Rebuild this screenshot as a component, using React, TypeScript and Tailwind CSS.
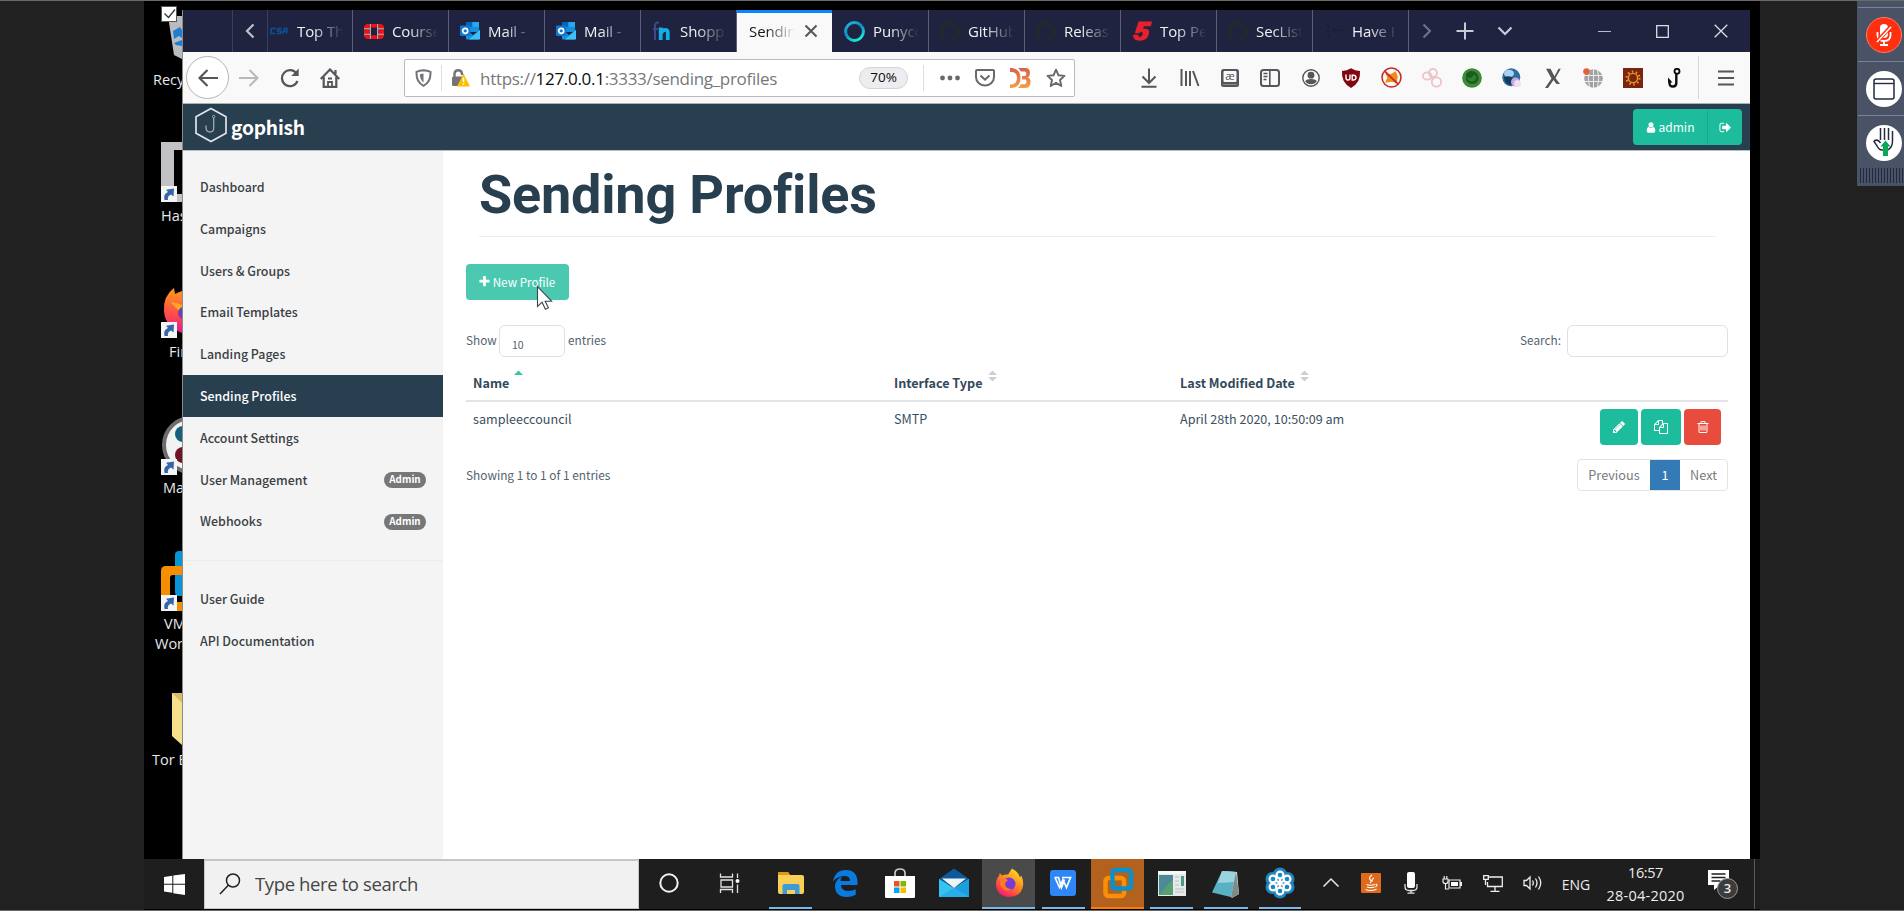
import React from "react";

const SEGOE = "font-['Open_Sans','Noto_Sans',sans-serif]";
const SITE = "font-['Noto_Sans_CJK_SC','Open_Sans',sans-serif]";

/* ---------- Font Awesome 4 glyphs ---------- */
const FA = {
  plus: "M1600 736v192q0 40-28 68t-68 28h-416v416q0 40-28 68t-68 28h-192q-40 0-68-28t-28-68v-416h-416q-40 0-68-28t-28-68v-192q0-40 28-68t68-28h416v-416q0-40 28-68t68-28h192q40 0 68 28t28 68v416h416q40 0 68 28t28 68z",
  user: "M1536 1399q0 109-62.5 187t-150.5 78h-854q-88 0-150.5-78t-62.5-187q0-85 8.5-160.5t31.5-152 58.5-131 94-89 134.5-34.5q131 128 313 128t313-128q76 0 134.5 34.5t94 89 58.5 131 31.5 152 8.5 160.5zm-256-887q0 159-112.5 271.5t-271.5 112.5-271.5-112.5-112.5-271.5 112.5-271.5 271.5-112.5 271.5 112.5 112.5 271.5z",
  signOut:
    "M704 1440q0 4 1 20t.5 26.5-3 23.5-10 19.5-20.5 6.5h-320q-119 0-203.5-84.5t-84.5-203.5v-704q0-119 84.5-203.5t203.5-84.5h320q13 0 22.5 9.5t9.5 22.5q0 4 1 20t.5 26.5-3 23.5-10 19.5-20.5 6.5h-320q-66 0-113 47t-47 113v704q0 66 47 113t113 47h312l11.5 1 11.5 3 8 5.5 7 9 2 13.5zm928-544q0 26-19 45l-544 544q-19 19-45 19t-45-19-19-45v-288h-448q-26 0-45-19t-19-45v-384q0-26 19-45t45-19h448v-288q0-26 19-45t45-19 45 19l544 544q19 19 19 45z",
  pencil:
    "M491 1536l91-91-235-235-91 91v107h128v128h107zm523-928q0-22-22-22-10 0-17 7l-542 542q-7 7-7 17 0 22 22 22 10 0 17-7l542-542q7-7 7-17zm-54-192l416 416-832 832h-416v-416zm683 96q0 53-37 90l-166 166-416-416 166-165q36-38 90-38 53 0 91 38l235 234q37 39 37 91z",
  trash:
    "M704 736v576q0 14-9 23t-23 9h-64q-14 0-23-9t-9-23v-576q0-14 9-23t23-9h64q14 0 23 9t9 23zm256 0v576q0 14-9 23t-23 9h-64q-14 0-23-9t-9-23v-576q0-14 9-23t23-9h64q14 0 23 9t9 23zm256 0v576q0 14-9 23t-23 9h-64q-14 0-23-9t-9-23v-576q0-14 9-23t23-9h64q14 0 23 9t9 23zm128 724v-948h-896v948q0 22 7 40.5t14.5 27 10.5 8.5h832q3 0 10.5-8.5t14.5-27 7-40.5zm-672-1076h448l-48-117q-7-9-17-11h-317q-10 2-17 11zm928 32v64q0 14-9 23t-23 9h-96v948q0 83-47 143.500t-113 60.500h-832q-66 0-113-58.500t-47-141.500v-952h-96q-14 0-23-9t-9-23v-64q0-14 9-23t23-9h309l70-167q15-37 54-63t79-26h320q40 0 79 26t54 63l70 167h309q14 0 23 9t9 23z",
  files:
    "M1696 384q40 0 68 28t28 68v1216q0 40-28 68t-68 28h-960q-40 0-68-28t-28-68v-288h-544q-40 0-68-28t-28-68v-672q0-40 20-88t48-76l408-408q28-28 76-48t88-20h416q40 0 68 28t28 68v328q68-40 128-40h416zm-544 213l-299 299h299v-299zm-640-384l-299 299h299v-299zm196 647l316-316v-416h-384v416q0 40-28 68t-68 28h-416v640h512v-256q0-40 20-88t48-76zm956 804v-1152h-384v416q0 40-28 68t-68 28h-416v640h896z",
};

function Fa({ d, className }: { d: string; className: string }) {
  return (
    <svg viewBox="0 0 1792 1792" className={className} fill="currentColor">
      <path d={d} />
    </svg>
  );
}

function Icon({ children, className = "h-5 w-5", box = "0 0 20 20" }: { children: React.ReactNode; className?: string; box?: string }) {
  return (
    <svg viewBox={box} className={`shrink-0 ${className}`} fill="none">
      {children}
    </svg>
  );
}

/* ---------- Tab strip ---------- */
const OutlookIcon = () => (
  <Icon>
    <rect x="6" y="1" width="13" height="10" rx="1" fill="#1490df" />
    <path d="M6 1h6.500v5H6z" fill="#0364b8" />
    <path d="M12.500 1H19v5h-6.500z" fill="#28a8ea" />
    <path d="M6 9l7 5 7-5v8.500a1 1 0 01-1 1H7a1 1 0 01-1-1z" fill="#1a8fe0" />
    <path d="M20 9v8.500a1 1 0 01-1 1H9z" fill="#3cc0f5" />
    <rect x="0" y="4.500" width="10.500" height="10.500" rx="1" fill="#0f78d4" />
    <circle cx="5.200" cy="9.800" r="2.500" stroke="#fff" strokeWidth="1.700" />
  </Icon>
);
const GithubIcon = () => (
  <Icon>
    <path
      fill="#23282e"
      d="M10 .3a10 10 0 00-3.200 19.500c.5.100.7-.2.700-.5v-1.700c-2.800.6-3.400-1.300-3.400-1.300-.5-1.200-1.100-1.500-1.100-1.500-.9-.6.1-.6.1-.6 1 .1 1.500 1 1.500 1 .9 1.500 2.300 1.100 2.900.8.1-.6.3-1.100.6-1.300-2.200-.3-4.600-1.100-4.600-5 0-1.100.4-2 1-2.700-.1-.3-.4-1.300.1-2.700 0 0 .8-.3 2.800 1a9.600 9.600 0 015 0c1.900-1.300 2.700-1 2.700-1 .5 1.400.2 2.400.1 2.700.6.700 1 1.600 1 2.700 0 3.900-2.300 4.700-4.600 5 .4.3.7.9.7 1.800v2.800c0 .3.2.6.7.5A10 10 0 0010 .3"
    />
  </Icon>
);
const CsaIcon = () => (
  <Icon className="h-5 w-[18px]" box="0 0 18 20">
    <path d="M6 7.500H1.500L.8 12.500H5M12 7.500H8L7.500 10H11l-.5 2.500H6.500M12.500 12.500L14.500 7.500H17l-.5 5M13.500 10.500h3" stroke="#0c4f96" strokeWidth="1.600" />
  </Icon>
);
const FortinetIcon = () => (
  <Icon>
    <g fill="#fb0d0d">
      <path d="M0 7V6a4 4 0 013-3h2.500v4zM0 8.500h5.500v4H0zM0 14h5.500v4H3a4 4 0 01-3-3z" />
      <path d="M7.200 3h5.600v3.500H7.200zM7.200 14.300h5.600V18H7.200z" />
      <path d="M20 7V6a4 4 0 00-3-3h-2.500v4zM14.500 8.500H20v4h-5.500zM20 14h-5.500v4H17a4 4 0 003-3z" />
    </g>
    <path d="M6.300 3v15M13.700 3v15M0 7.800h6M14 7.800h6M0 13.200h6M14 13.200h6" stroke="#d8c8d0" strokeWidth="1" />
  </Icon>
);
const FinIcon = () => (
  <Icon>
    <path d="M3 19V5q0-4 4-3.500M1 8h5" stroke="#3c4a80" strokeWidth="2" />
    <path d="M8.700 19V6.500M15.800 19v-7.500q0-2.600-2.400-2.600-4 0-4.200 4" stroke="#12aee8" strokeWidth="3.800" />
  </Icon>
);
const PunyIcon = () => (
  <Icon className="h-[21px] w-[21px]">
    <defs>
      <linearGradient id="puny" x1="0" y1="0" x2=".6" y2="1">
        <stop offset="0" stopColor="#18c0dc" />
        <stop offset=".5" stopColor="#1488d0" />
        <stop offset="1" stopColor="#14e8d0" />
      </linearGradient>
    </defs>
    <circle cx="10" cy="10" r="8.500" stroke="url(#puny)" strokeWidth="2.800" />
  </Icon>
);
const FiveIcon = () => (
  <Icon>
    <path d="M6.500.5H20l-1.200 4.800h-7l-.6 2.500q7-1 5.800 4.600-1.500 7.300-9.500 7.300Q.7 19.700 1 13.800h5.300q-.1 2.200 1.500 2.200 2.200 0 2.800-2.700.5-2.300-1.300-2.300-1.300 0-2 1.200H2.800z" fill="#e8202c" />
  </Icon>
);
const PwnedIcon = () => (
  <Icon>
    <path d="M3 4l2 2M2 10h3M4 13l2 2M9 9.500h4M15 9.500h4" stroke="#181c30" strokeWidth="1.500" />
  </Icon>
);

type TabData = { title: string; icon?: React.ReactNode; width: string; pad: string; active?: boolean };
const TABS: TabData[] = [
  { title: "Top Th", icon: <CsaIcon />, width: "w-[85px]", pad: "pl-[2px] gap-[9px]" },
  { title: "Course", icon: <FortinetIcon />, width: "w-24", pad: "pl-[11px] gap-2" },
  { title: "Mail -", icon: <OutlookIcon />, width: "w-24", pad: "pl-[11px] gap-2" },
  { title: "Mail -", icon: <OutlookIcon />, width: "w-24", pad: "pl-[11px] gap-2" },
  { title: "Shopp", icon: <FinIcon />, width: "w-24", pad: "pl-[11px] gap-2" },
  { title: "Sending", width: "w-[95px]", pad: "pl-[12px]", active: true },
  { title: "Punyco", icon: <PunyIcon />, width: "w-[97px]", pad: "pl-3 gap-2" },
  { title: "GitHub", icon: <GithubIcon />, width: "w-24", pad: "pl-[11px] gap-2" },
  { title: "Releas", icon: <GithubIcon />, width: "w-24", pad: "pl-[11px] gap-2" },
  { title: "Top Pe", icon: <FiveIcon />, width: "w-24", pad: "pl-[11px] gap-2" },
  { title: "SecList", icon: <GithubIcon />, width: "w-24", pad: "pl-[11px] gap-2" },
  { title: "Have I", icon: <PwnedIcon />, width: "w-24", pad: "pl-[11px] gap-2" },
];

function Tab({ tab }: { tab: TabData }) {
  const tone = tab.active ? "bg-[#f9f9fa] text-[#15141a] border-t-[3px] border-t-[#0a84ff] pb-[3px]" : "text-[#f0f0f4] border-r border-[#5c5d77]";
  return (
    <div className={`flex h-full shrink-0 items-center ${tab.width} ${tab.pad} ${tone}`}>
      {tab.icon}
      <span className="w-[47px] overflow-hidden whitespace-nowrap pt-px text-[15px] tracking-[-0.1px] [mask-image:linear-gradient(to_right,black_35%,transparent_98%)]">{tab.title}</span>
      {tab.active && (
        <Icon className="ml-[7px] h-4 w-4" box="0 0 16 16">
          <path d="M2.500 2.500l11 11M13.500 2.500l-11 11" stroke="#55555a" strokeWidth="2" />
        </Icon>
      )}
    </div>
  );
}

function TabStrip() {
  return (
    <div className="flex h-[42px] shrink-0 bg-[#20233f]">
      <div className="w-[50px] border-r border-[#3c3e5a]" />
      <div className="flex w-[35px] items-center justify-center border-r border-[#3c3e5a]">
        <Icon className="h-4 w-3" box="0 0 12 16">
          <path d="M9.500 1.500L3 8l6.500 6.500" stroke="#c0c1cc" strokeWidth="2.200" />
        </Icon>
      </div>
      {TABS.map((t, i) => (
        <Tab key={i} tab={t} />
      ))}
      <div className="flex w-[36px] items-center justify-center">
        <Icon className="h-4 w-3" box="0 0 12 16">
          <path d="M2.500 1.500L9 8l-6.500 6.500" stroke="#72738a" strokeWidth="2" />
        </Icon>
      </div>
      <div className="flex w-[39px] items-center justify-center">
        <Icon className="h-[18px] w-[18px]" box="0 0 18 18">
          <path d="M9 .5v17M.5 9h17" stroke="#c9cad4" strokeWidth="2" />
        </Icon>
      </div>
      <div className="flex w-[42px] items-center justify-center">
        <Icon className="h-4 w-4" box="0 0 16 16">
          <path d="M1.500 4.500L8 11l6.500-6.500" stroke="#c9cad4" strokeWidth="2.200" />
        </Icon>
      </div>
      <div className="ml-[49px] flex w-[58px] items-center justify-center">
        <Icon className="h-[13px] w-[13px]" box="0 0 13 13">
          <path d="M0 6.500h13" stroke="#b9bac6" />
        </Icon>
      </div>
      <div className="flex w-[58px] items-center justify-center">
        <Icon className="h-[13px] w-[13px]" box="0 0 13 13">
          <path d="M.7.7h11.600v11.600H.7z" stroke="#dddde4" strokeWidth="1.300" />
        </Icon>
      </div>
      <div className="flex w-[59px] items-center justify-center">
        <Icon className="h-[14px] w-[14px]" box="0 0 14 14">
          <path d="M.7.7l12.600 12.600M13.300.7L.7 13.300" stroke="#dddde4" strokeWidth="1.300" />
        </Icon>
      </div>
    </div>
  );
}

/* ---------- Address bar ---------- */
const G = "#55555a";
const TOOLBAR: React.ReactNode[] = [
  <Icon>
    <path d="M10 .5v14M3.500 8.500L10 15l6.500-6.500M2.500 18.700h15" stroke={G} strokeWidth="2" />
  </Icon>,
  <Icon>
    <path d="M1.500 1v17M6 3v15M10 3v15M13 3l5.500 15" stroke={G} strokeWidth="2" />
  </Icon>,
  <Icon>
    <rect x="1" y="1" width="18" height="18" rx="2.500" fill={G} />
    <rect x="3.500" y="3" width="13" height="11" rx="1" fill="#f9f9fa" />
    <path d="M3 16.500h14" stroke="#8d8d92" />
    <text x="10" y="11.500" fontSize="11" textAnchor="middle" fill={G} className="font-['Open_Sans']">
      æ
    </text>
  </Icon>,
  <Icon>
    <rect x="1" y="2" width="18" height="16" rx="2.500" stroke={G} strokeWidth="2" />
    <path d="M9.800 2v16M3.500 5.500h4M3.500 8.500h4M3.500 11.500h3" stroke={G} strokeWidth="1.600" />
  </Icon>,
  <Icon>
    <circle cx="10" cy="10" r="8.200" stroke={G} strokeWidth="1.400" />
    <circle cx="10" cy="7.200" r="3.400" fill={G} />
    <path d="M4.200 13q1.500-2 5.800-2t5.800 2q-1.800 3.300-5.800 3.300T4.200 13z" fill={G} />
  </Icon>,
  <Icon>
    <path d="M10 .3q4 2.400 9 2.700 1 11.500-9 17Q0 14.500 1 3q5-.3 9-2.700z" fill="#800610" />
    <path d="M5 6.500v3.500q0 2 2 2t2-2V6.500M11.200 7.200h1.500q2.300.2 2.300 2.400t-2.300 2.400h-1.500z" stroke="#fff" strokeWidth="1.400" />
  </Icon>,
  <Icon className="h-[21px] w-[21px]">
    <path d="M4 15l2-5-2-4 5 1 5-3 2 5-1 6-5-1z" fill="#f08a1a" />
    <circle cx="10" cy="10" r="9" stroke="#c82a20" strokeWidth="1.500" />
    <path d="M3.500 4l13 12.500" stroke="#c82a20" strokeWidth="1.700" />
  </Icon>,
  <Icon>
    <g stroke="#ecc3c6" strokeWidth="1.800">
      <circle cx="11" cy="5" r="4" />
      <ellipse cx="5.300" cy="8" rx="4.400" ry="3.600" />
      <circle cx="14.500" cy="14" r="4.700" />
      <path d="M8 10l4 1" />
    </g>
  </Icon>,
  <Icon>
    <circle cx="10" cy="10" r="9.800" fill="#3c8a34" />
    <path d="M4 6q3-4 8-2.500 5 2 4.500 7.500-1 5-7 5-5-1-5.500-5z" fill="#1c5a20" />
    <path d="M5 9q4 3 7-2.500 3 1 2 4.500-1.500 3-5 2.500Q5.500 13 5 9z" fill="#2f8030" />
  </Icon>,
  <Icon>
    <circle cx="9.300" cy="9.300" r="9" fill="#2d6c9e" />
    <ellipse cx="7" cy="5.500" rx="5" ry="3.800" fill="#a9d2ee" />
    <path d="M2 9q6-2 9 1t-2 7Q2 16 2 9z" fill="#123b60" />
    <circle cx="13.500" cy="14" r="4.500" fill="#c9a6dc" />
    <circle cx="15.500" cy="15.500" r="3.500" fill="#ece0f4" />
  </Icon>,
  <Icon>
    <path d="M3 .8h4.500l4 7.500L15.500.8h2.300L12.500 10l4.500 6h-3.500L10.500 12 5 20H2l6.500-9.500z" fill={G} />
  </Icon>,
  <Icon>
    <circle cx="10.500" cy="10.500" r="9.300" fill="#a2a2a2" />
    <path d="M1 7.500h19M1 13.500h19M10.500 1v19M6.500 2q-2.500 8 0 17M14.500 2q2.500 8 0 17" stroke="#ececec" />
    <circle cx="3.500" cy="3.500" r="3.300" fill="#e0643a" />
  </Icon>,
  <Icon>
    <rect width="20" height="20" fill="#7d2410" />
    <circle cx="10" cy="10" r="4.600" stroke="#e39a2c" strokeWidth="1.400" />
    <circle cx="10" cy="10" r="6.400" stroke="#e39a2c" strokeWidth="2.200" strokeDasharray="1.500 2.520" />
  </Icon>,
  <Icon>
    <circle cx="13" cy="3.300" r="2.500" stroke="#0c0c0d" strokeWidth="1.900" />
    <path d="M12.300 6v9q0 3.500-3.400 3.500T5.500 15v-2.500" stroke="#0c0c0d" strokeWidth="2.400" />
    <path d="M4 14.500V9.500l4.500 5z" fill="#0c0c0d" />
  </Icon>,
];

function AddressBar() {
  return (
    <div className="flex h-[52px] shrink-0 items-center border-b border-[#a9b3b5] bg-[#f9f9fa]">
      <div className="ml-[3px] flex h-[43px] w-[43px] items-center justify-center rounded-full border border-[#b5b5b8] bg-white">
        <Icon>
          <path d="M20 10H2M9.500 2L1.500 10l8 8" stroke={G} strokeWidth="2.200" />
        </Icon>
      </div>
      <div className="flex w-[40px] items-center justify-center">
        <Icon>
          <path d="M0 10h18M10.500 2l8 8-8 8" stroke="#b9b9bb" strokeWidth="2" />
        </Icon>
      </div>
      <div className="flex w-[41px] items-center justify-center">
        <Icon>
          <path d="M16.500 5.500A8 8 0 1017.500 13" stroke={G} strokeWidth="2.200" />
          <path d="M18.700.5v7.500h-7.500z" fill={G} />
        </Icon>
      </div>
      <div className="flex w-[39px] items-center justify-center">
        <Icon>
          <path d="M.7 11L10 1.500 19.300 11M3.700 9v9.800h12.600V9M15.500 2v4" stroke={G} strokeWidth="2.200" />
          <path d="M8 19v-5h4v5M8 10.500h4" stroke={G} strokeWidth="1.800" />
        </Icon>
      </div>
      <div className="ml-[55px] flex h-[38px] w-[671px] items-center rounded-[2px] border border-[#b9b9bb] bg-white">
        <Icon className="ml-[10px] h-[18px] w-[17px]" box="0 0 17 18">
          <path d="M8.500 1.200q4 .2 7 1.600.5 10.500-7 14-7.500-3.500-7-14 3-1.400 7-1.600z" stroke="#737378" strokeWidth="2" />
          <path d="M8.500 4.500v9Q5 11 4.900 5.200z" fill="#737378" />
        </Icon>
        <div className="ml-[9px] h-[26px] w-px bg-[#dedee0]" />
        <Icon className="ml-[9px] h-[19px] w-[19px]" box="0 0 19 19">
          <path d="M3.500 10V5.500a3.800 3.800 0 017.500 0V7" stroke="#737378" strokeWidth="2.400" />
          <rect x="1" y="8.500" width="11.500" height="9.500" rx="1.500" fill="#737378" />
          <path d="M12.500 5.500L19 18.500H6z" fill="#ffbf00" />
          <path d="M12.500 9.500v4.500M12.500 15.300v1.500" stroke="#fff" strokeWidth="1.500" />
        </Icon>
        <div className="ml-[10px] flex-1 whitespace-nowrap pt-[2px] text-[17px] tracking-[-0.3px] text-[#77777b]">
          https://<span className="text-[#0c0c0d]">127.0.0.1</span>:3333/sending_profiles
        </div>
        <div className="mr-[-1px] flex h-[22px] w-[49px] shrink-0 items-center justify-center rounded-full border border-[#d4d4d6] bg-[#ededf0] text-[13.500px] text-[#0c0c0d]">70%</div>
        <div className="ml-4 h-[26px] w-px bg-[#dedee0]" />
        <Icon className="ml-[16px] h-5 w-5">
          <g fill="#68686d">
            <circle cx="2.500" cy="10" r="2.400" />
            <circle cx="10" cy="10" r="2.400" />
            <circle cx="17.500" cy="10" r="2.400" />
          </g>
        </Icon>
        <Icon className="ml-[15px] h-5 w-5">
          <path d="M2 2h16a1 1 0 011 1v6a9 8.500 0 01-18 0V3a1 1 0 011-1z" stroke="#68686d" strokeWidth="2" />
          <path d="M5.500 7.500l4.500 4.200 4.500-4.200" stroke="#68686d" strokeWidth="2" />
        </Icon>
        <Icon className="ml-[14px] h-5 w-[22px]" box="0 0 22 20">
          <defs>
            <linearGradient id="db" x1="0" y1="0" x2="0" y2="1">
              <stop offset="0" stopColor="#d8604c" />
              <stop offset="1" stopColor="#f5a044" />
            </linearGradient>
          </defs>
          <path d="M1 0h2q8.500 1 8.500 10T3 20H1v-3.500h2Q8 15.500 8 10T3 4H1z" fill="url(#db)" />
          <path d="M9 0h8q4 .5 4 5 0 3-2 4.500 3 1.500 2.500 5-.5 5.500-5 5.500H9q2-1.500 2.700-3.800H16q1.500-.4 1.500-2.700T16 11.500h-3V8h3q1.300-.5 1.300-2.300T16 3.500h-4.200Q10.700 1 9 0z" fill="url(#db)" />
        </Icon>
        <Icon className="ml-[15px] mr-[8px] h-5 w-5">
          <path d="M10 1.700l2.500 5.600 6 .6-4.500 4.100 1.300 6L10 14.900 4.700 18 6 12 1.500 7.900l6-.6z" stroke="#68686d" strokeWidth="1.900" strokeLinejoin="round" />
        </Icon>
      </div>
      <div className="ml-[54px] grid w-[565px] grid-cols-[repeat(14,1fr)]">
        {TOOLBAR.map((ic, i) => (
          <div key={i} className="flex h-6 items-center justify-center">
            {ic}
          </div>
        ))}
      </div>
      <div className="ml-[4px] h-[43px] w-px bg-[#d7d7da]" />
      <Icon className="ml-[19px] h-4 w-4" box="0 0 16 16">
        <path d="M.5 1.500h15M.5 8h15M.5 14.500h15" stroke={G} strokeWidth="2" strokeLinecap="round" />
      </Icon>
    </div>
  );
}

/* ---------- Gophish page ---------- */
const NAV = [
  { label: "Dashboard" },
  { label: "Campaigns" },
  { label: "Users & Groups" },
  { label: "Email Templates" },
  { label: "Landing Pages" },
  { label: "Sending Profiles", active: true },
  { label: "Account Settings" },
  { label: "User Management", admin: true },
  { label: "Webhooks", admin: true },
];

function NavItem({ label, active, admin }: { label: string; active?: boolean; admin?: boolean }) {
  return (
    <li className={`flex h-[41.800px] items-center justify-between pl-[17px] pr-[17px] text-[12.400px] font-medium leading-none ${active ? "bg-[#283f50] text-white" : "text-[#3a3f44]"}`}>
      <span className="pb-[0.500px]">{label}</span>
      {admin && <span className="flex h-4 w-[42px] items-center justify-center rounded-full bg-[#777] text-[9.800px] font-bold text-white">Admin</span>}
    </li>
  );
}

function SortArrows({ asc }: { asc?: boolean }) {
  return (
    <Icon className="mb-[15px] h-3 w-[9px]" box="0 0 9 12">
      <path d="M0 5L4.500.5 9 5z" fill={asc ? "#3fc4a8" : "#cfcfcf"} />
      {!asc && <path d="M0 7h9l-4.500 4.500z" fill="#cfcfcf" />}
    </Icon>
  );
}

function GophishPage() {
  return (
    <div className={`flex min-h-0 flex-1 flex-col ${SITE}`}>
      <header className="flex h-[47px] shrink-0 items-center border-b border-[#b5bfc6] bg-[#283f50]">
        <Icon className="ml-[12px] mt-[-5px] h-[36px] w-[32px]" box="0 0 32 36">
          <path d="M16 1.500l15 8.300v16.400L16 34.500 1 26.200V9.800z" stroke="#dfe4e8" strokeWidth="1.700" />
          <circle cx="18.700" cy="9.500" r="1.200" stroke="#9fabb4" />
          <path d="M18.700 11v10q0 4-3.700 4t-4-4v-2.500" stroke="#9fabb4" strokeWidth="1.300" />
        </Icon>
        <span className="ml-[4px] flex-1 pt-px text-[19.200px] font-bold leading-none tracking-[-0.2px] text-white">gophish</span>
        <div className="mr-[8px] flex h-9 overflow-hidden rounded-[4px] bg-[#1dbc9c] text-white">
          <div className="flex w-[75px] items-center justify-center gap-[2px] border-r border-[#1aa98c] pr-px">
            <Fa d={FA.user} className="h-[13px] w-[12px]" />
            <span className="pb-px text-[12px] leading-none">admin</span>
          </div>
          <div className="flex w-[34px] items-center justify-center">
            <Fa d={FA.signOut} className="h-[13px] w-[13px]" />
          </div>
        </div>
      </header>
      <div className="flex min-h-0 flex-1 bg-white">
        <nav className="w-[260px] shrink-0 bg-[#f4f4f4] pt-[15.500px]">
          <ul>
            {NAV.map((n) => (
              <NavItem key={n.label} {...n} />
            ))}
            <li className="my-[17.500px] h-px bg-[#ececec]" />
            <NavItem label="User Guide" />
            <NavItem label="API Documentation" />
          </ul>
        </nav>
        <main className="flex-1 pl-[23px] pr-[22px] text-[12px] leading-none text-[#53636f]">
          <h1 className="ml-[13px] mr-[13px] h-[86px] whitespace-nowrap border-b border-[#eeeeee] pt-[12px] font-['Roboto',sans-serif] text-[54px] font-bold leading-[64px] tracking-[-0.2px] text-[#283f50]">Sending Profiles</h1>
          <div className="relative mt-[27px] flex h-9 w-[103px] items-center justify-center gap-[2px] rounded-[4px] bg-[#4ac9b0] pr-[2px] text-white">
            <Fa d={FA.plus} className="mb-px h-[13px] w-[13px]" />
            <span className="pb-px text-[11.700px]">New Profile</span>
            <svg viewBox="0 0 18 25" className="absolute left-[70px] top-[21px] h-[25px] w-[18px]">
              <path d="M1.500 1.500v20l4.600-4.300 3.300 7 3-1.400-3.200-6.600h6.400z" fill="#fff" stroke="#3c4650" strokeWidth="1.100" />
            </svg>
          </div>
          <div className="mt-[25px] flex h-[32px] items-center">
            <span className="w-[30.500px] pb-[3px] text-[11.800px]">Show</span>
            <span className="ml-[2.500px] mr-[3px] flex h-8 w-[66px] items-center rounded-[6px] border border-[#dce1e2] pl-[12px] pt-[8px] text-[10.500px]">10</span>
            <span className="pb-[3px] text-[11.800px]">entries</span>
            <span className="ml-auto pb-[3px] text-[11.800px]">Search:</span>
            <span className="ml-[6px] h-8 w-[161px] rounded-[6px] border border-[#dce1e2]" />
          </div>
          <div className="grid h-[45px] grid-cols-[421px_286px_1fr] items-center border-b-2 border-[#e2e3e4] pl-[7px] pt-[9px] text-[12.600px] font-bold text-[#33495a]">
            {["Name", "Interface Type", "Last Modified Date"].map((h, i) => (
              <div key={h} className="flex items-center gap-[5px] whitespace-nowrap">
                <span className="pt-px">{h}</span>
                <SortArrows asc={i === 0} />
              </div>
            ))}
          </div>
          <div className="grid h-[51px] grid-cols-[421px_286px_1fr_auto] pl-[7px] pr-[7px] pt-[7px] text-[12.600px] text-[#3b5060]">
            <span className="pt-[4px]">sampleeccouncil</span>
            <span className="pt-[4px]">SMTP</span>
            <span className="pt-[4px]">April 28th 2020, 10:50:09 am</span>
            <div className="flex h-9 gap-[3px] text-white">
              <div className="flex w-[38px] items-center justify-center rounded-[4px] bg-[#1dbc9c]">
                <Fa d={FA.pencil} className="h-[14px] w-[14px]" />
              </div>
              <div className="flex w-[40px] items-center justify-center rounded-[4px] bg-[#1dbc9c]">
                <Fa d={FA.files} className="h-[14px] w-[14px]" />
              </div>
              <div className="flex w-[37px] items-center justify-center rounded-[4px] bg-[#e84c3d]">
                <Fa d={FA.trash} className="h-[14px] w-[14px]" />
              </div>
            </div>
          </div>
          <div className="mt-[6px] flex h-8 items-center justify-between">
            <span className="pb-px text-[11.850px]">Showing 1 to 1 of 1 entries</span>
            <div className="flex h-8 w-[151px] overflow-hidden rounded-[4px] border border-[#e3e3e3] text-[12.700px] text-[#7b7b7b]">
              <span className="flex w-[72px] items-center justify-center">Previous</span>
              <span className="-my-px flex w-[30px] items-center justify-center bg-[#337ab7] text-white">1</span>
              <span className="flex flex-1 items-center justify-center">Next</span>
            </div>
          </div>
        </main>
      </div>
    </div>
  );
}

/* ---------- Desktop icons behind the window ---------- */
function Shortcut({ y }: { y: number }) {
  return (
    <g transform={`translate(17 ${y})`}>
      <rect width="16" height="16" fill="#f4f4f6" />
      <path d="M3.500 14q-1.500-6 3.500-8L5 3.800 13 2.500 12.500 10.500 10 8.500Q6 10 7 14z" fill="#3465a8" />
    </g>
  );
}

const LABELS = [
  { text: "Recy", cls: "left-[9px] top-[70px]" },
  { text: "Has", cls: "left-[17px] top-[206px]" },
  { text: "Fir", cls: "left-[25px] top-[342px]" },
  { text: "Ma", cls: "left-[19px] top-[478px]" },
  { text: "VM", cls: "left-[20px] top-[614px]" },
  { text: "Wor", cls: "left-[11px] top-[634px]" },
  { text: "Tor B", cls: "left-[8px] top-[750px]" },
];

function DesktopStrip() {
  return (
    <div className="relative h-full w-[38px] shrink-0 overflow-hidden">
      <svg viewBox="0 0 38 858" className="h-[858px] w-[38px]" fill="none">
        <defs>
          <linearGradient id="ffx" x1="0" y1="0" x2="0" y2="1">
            <stop offset="0" stopColor="#ff9b1a" />
            <stop offset=".6" stopColor="#ff4a4a" />
            <stop offset="1" stopColor="#e0189a" />
          </linearGradient>
        </defs>
        <path d="M24 15h14v43l-8-4z" fill="#b9bbbf" />
        <path d="M29 30l7-4 2 3v8l-3-2-5 3zM30 42l8-3v6l-6-1z" fill="#1e7fd0" />
        <rect x="17.500" y="5.500" width="15" height="15" fill="#fff" stroke="#555" />
        <path d="M20.500 12.500l4 4 6.500-8" stroke="#333" strokeWidth="1.300" />
        <path d="M17 141h21v8H30v44h8v8H17z" fill="#c2c2c4" />
        <Shortcut y={185} />
        <path d="M38 290q-3 1-7 3l-1-6q-11 8-10 23 1 16 18 22z" fill="url(#ffx)" />
        <path d="M27 301q4 0 11 3v6q-5 0-11-9z" fill="#ffa724" />
        <circle cx="40" cy="312" r="6" fill="#6a3fb0" />
        <Shortcut y={321} />
        <circle cx="47" cy="444" r="27" fill="#f2f2f2" stroke="#6d6d6d" strokeWidth="4" />
        <circle cx="39" cy="433" r="8" fill="#14607e" />
        <circle cx="39" cy="454" r="8" fill="#6e1424" />
        <Shortcut y={458} />
        <path d="M38 550h-3q-4 0-4 4v37q0 4 4 4h3z" fill="#0a94d6" />
        <path d="M38 565H22q-5 0-5 5v40h21v-9H26v-24q0-3 3-3h9z" fill="#f58e00" />
        <Shortcut y={594} />
        <path d="M28 692h10v52l-10-9z" fill="#f7e08c" />
        <path d="M28 692h10v10z" fill="#d9bd62" />
      </svg>
      {LABELS.map((l) => (
        <span key={l.text} className={`absolute whitespace-nowrap text-[14.500px] leading-[18px] text-[#e8e8e8] ${l.cls}`}>
          {l.text}
        </span>
      ))}
    </div>
  );
}

/* ---------- Taskbar ---------- */
type Task = { w: string; bar?: string; tile?: string; icon: React.ReactNode };
const BIG = "h-8 w-8";
const B32 = "0 0 32 32";
const TASKS: Task[] = [
  {
    w: "w-[60px]",
    icon: (
      <Icon className={BIG} box={B32}>
        <circle cx="16" cy="16" r="8.700" stroke="#f2f2f2" strokeWidth="2" />
      </Icon>
    ),
  },
  {
    w: "w-[62px]",
    icon: (
      <Icon className={BIG} box={B32}>
        <path d="M6.500 6.500v3.500h12V6.500M6.500 26v-3.500h12V26M7 13h11.500v7H7zM23.500 6.500V11M23.500 17.500V26" stroke="#e2e2e2" strokeWidth="1.300" />
        <circle cx="23.500" cy="14" r="2" fill="#fff" />
      </Icon>
    ),
  },
  {
    w: "w-[59px]",
    bar: "mx-2 bg-[#76b9ed]",
    icon: (
      <Icon className={BIG} box={B32}>
        <path d="M3 5h10l2 3h12q2 0 2 2v15q0 2-2 2H5q-2 0-2-2z" fill="#f9cf58" />
        <path d="M3 5h10l2 3H3z" fill="#d99a14" />
        <path d="M7.500 27V19q0-2 2-2h13q2 0 2 2v8h-4.500v-4h-8v4z" fill="#3f9ad8" />
      </Icon>
    ),
  },
  {
    w: "w-[49px]",
    icon: (
      <Icon className={BIG} box={B32}>
        <path
          d="M4 14.500Q6 3 17 3q11 0 11.500 12v3H12q.3 6 7.500 6 4 0 7.200-1.800v5.600Q23 30 17.500 30 6 29.500 6 19q.2-6.500 7-9.500-1.300 1.500-1.500 4.500H21q0-5-5.500-5Q8.500 9 4 14.500z"
          fill="#0a7adf"
        />
      </Icon>
    ),
  },
  {
    w: "w-[62px]",
    icon: (
      <Icon className={BIG} box={B32}>
        <path d="M11 12V6q0-4 5-4t5 4v6" stroke="#c9c9c9" strokeWidth="1.700" />
        <path d="M1 9h30v21q0 1-1.500 1h-27Q1 31 1 30z" fill="#fff" />
        <path d="M10 14h5.500v5.500H10z" fill="#f25022" />
        <path d="M16.500 14H22v5.500h-5.500z" fill="#7fba00" />
        <path d="M10 20.500h5.500V26H10z" fill="#00a4ef" />
        <path d="M16.500 20.500H22V26h-5.500z" fill="#ffb900" />
      </Icon>
    ),
  },
  {
    w: "w-[51px] pr-[5px]",
    icon: (
      <Icon className={BIG} box={B32}>
        <path d="M1 12L16 1.500 31 12v5H1z" fill="#0b5a9e" />
        <path d="M1 12l15 9 15-9v18H1z" fill="#35c3f2" />
        <path d="M1 30L16 21l15 9z" fill="#2aaeea" />
        <path d="M16 21l15-9v18z" fill="#1c9fe0" />
        <path d="M4 11.500h24L16 21z" fill="#f1f4f7" />
      </Icon>
    ),
  },
  {
    w: "w-[53px]",
    bar: "bg-[#76b9ed]",
    tile: "bg-[#4a4a4a]",
    icon: (
      <Icon className={BIG} box={B32}>
        <defs>
          <linearGradient id="ff2" x1=".8" y1="0" x2=".2" y2="1">
            <stop offset="0" stopColor="#ffe226" />
            <stop offset=".45" stopColor="#ff8a1e" />
            <stop offset=".8" stopColor="#ff3a4e" />
            <stop offset="1" stopColor="#e0128a" />
          </linearGradient>
        </defs>
        <path d="M19 1.500q7 4 8 9l1.200-2Q31 14 30 19q-2 11-14 11Q4 29.500 3 18q-.2-6 3-9l.8-3 2.200 2.500q3-1.500 6-1z" fill="url(#ff2)" />
        <circle cx="16" cy="17" r="6.500" fill="#7a3ad8" />
        <path d="M8 11q4 0 7 2l-3 3q0 6 7 6-5 4-10-1-3-4-1-10z" fill="#ff7a24" />
      </Icon>
    ),
  },
  {
    w: "w-[56px]",
    bar: "mx-[6.500px] bg-[#76b9ed]",
    icon: (
      <Icon className={BIG} box={B32}>
        <rect x="3" y="3" width="26" height="26" rx="3" fill="#2f86f6" />
        <path d="M7.500 10.500h4l3 10 3-8M15 10.500h8.500l-4 10-3.500-8-3.500 8-4.500-10" stroke="#fff" strokeWidth="1.700" />
      </Icon>
    ),
  },
  {
    w: "w-[53px]",
    bar: "bg-[#ff7a08]",
    tile: "bg-[#b2611f]",
    icon: (
      <Icon className={BIG} box={B32}>
        <rect x="3.500" y="11" width="18.500" height="18" rx="3" stroke="#f78f08" strokeWidth="4.500" />
        <rect x="10.500" y="3" width="18.500" height="18.500" rx="3" stroke="#0a90cc" strokeWidth="4.500" />
        <path d="M12.800 11h4" stroke="#f78f08" strokeWidth="4.500" />
      </Icon>
    ),
  },
  {
    w: "w-[55px]",
    bar: "mx-[6px] bg-[#76b9ed]",
    icon: (
      <Icon className={BIG} box={B32}>
        <rect x="2" y="4" width="28" height="25" fill="#e6e9ea" />
        <rect x="3" y="8" width="14" height="20" fill="#4d8a98" />
        <path d="M3 28L17 12v16z" fill="#58a070" />
        <path d="M2 4h28v3H2z" fill="#f8f8f8" />
        <path d="M25 9h3v10h-3z" fill="#4d9a80" />
        <path d="M19 10h4M19 14h4M19 18h4M19 22h9M19 25h9" stroke="#b8c0c2" />
      </Icon>
    ),
  },
  {
    w: "w-[53px]",
    bar: "mx-[4.500px] bg-[#76b9ed]",
    icon: (
      <Icon className={BIG} box={B32}>
        <path d="M12 4l15 1 2 22-7 4-3-3z" fill="#dfe3e0" />
        <path d="M12 4l14 1-5 25L2 25.500z" fill="#59b2c4" />
        <path d="M12 4l14 1-2 10-16 1z" fill="#9ad4dc" />
        <path d="M26 5l3 22-7 4-1-1z" fill="#7e8c88" />
      </Icon>
    ),
  },
  {
    w: "w-[57px] pr-px",
    bar: "mx-[7px] bg-[#76b9ed]",
    icon: (
      <Icon className={BIG} box={B32}>
        <g fill="#1f86c4">
          <circle cx="16" cy="7.500" r="7" />
          <circle cx="16" cy="24.500" r="7" />
          <circle cx="8.500" cy="12" r="7" />
          <circle cx="23.500" cy="12" r="7" />
          <circle cx="8.500" cy="20" r="7" />
          <circle cx="23.500" cy="20" r="7" />
        </g>
        <g stroke="#fff" strokeWidth="2.200">
          <circle cx="16" cy="8" r="3.400" />
          <circle cx="16" cy="24" r="3.400" />
          <circle cx="9" cy="12" r="3.400" />
          <circle cx="23" cy="12" r="3.400" />
          <circle cx="9" cy="20" r="3.400" />
          <circle cx="23" cy="20" r="3.400" />
          <path d="M16 12v8M12.500 14l7 4M19.500 14l-7 4" />
        </g>
      </Icon>
    ),
  },
  {
    w: "w-[44px]",
    icon: (
      <Icon>
        <path d="M2.500 13.500L10 6l7.500 7.500" stroke="#e8e8e8" strokeWidth="1.500" />
      </Icon>
    ),
  },
  {
    w: "w-[36px]",
    icon: (
      <Icon>
        <rect width="20" height="20" rx="1" fill="#e06a1c" />
        <path d="M11 2q-4 3-1.500 5 1.500 1.500-.5 3M13 5q-3 1.500-1.500 3.500M5.500 11.500q4 1.500 8.500 0M6 14q4 1.300 7.500 0M4.500 16.500q5 2 11-.3M14.500 11q3 .5 0 3" stroke="#fff" strokeWidth="1.100" />
      </Icon>
    ),
  },
  {
    w: "w-[43px]",
    icon: (
      <Icon className="h-[22px] w-[14px]" box="0 0 14 22">
        <rect x="3" y="0" width="8" height="16" rx="2" fill="#fff" />
        <path d="M1 12v2.500q0 4 4 4h4q4 0 4-4V12M7 18.500V21M3.500 21.200h7" stroke="#e2e2e2" strokeWidth="1.300" />
      </Icon>
    ),
  },
  {
    w: "w-[40px]",
    icon: (
      <Icon>
        <path d="M1 6h5v2.500q0 2-2.500 2T1 8.500zM2.200 3v3M4.800 3v3M3.500 10.500V16H7" stroke="#eee" strokeWidth="1.200" />
        <path d="M7 7h11v8H7zM18.500 9.500h1v3h-1z" stroke="#eee" strokeWidth="1.200" />
        <path d="M9 9h7v4H9z" fill="#fff" />
      </Icon>
    ),
  },
  {
    w: "w-[41px]",
    icon: (
      <Icon>
        <path d="M6 4h13.300v9.500H4.500V9M12 13.500V18M7.500 18.300h9" stroke="#eee" strokeWidth="1.300" />
        <path d="M.7 2.700h4.600v3.600H.7zM2.500 6.500V12" stroke="#eee" strokeWidth="1.300" />
      </Icon>
    ),
  },
  {
    w: "w-[40px]",
    icon: (
      <Icon>
        <path d="M1 7.500h2.500L7 4v12l-3.500-3.500H1z" stroke="#eee" strokeWidth="1.300" />
        <path d="M9.500 7.500q1.600 2.500 0 5M12.500 5.500q3 4.500 0 9M15.500 3.500q4.500 6.500 0 13" stroke="#eee" strokeWidth="1.300" />
      </Icon>
    ),
  },
];

function Taskbar() {
  return (
    <div className="flex h-[50px] shrink-0 bg-[#1e1e1e] text-[#ececec]">
      <div className="flex w-[60px] items-center justify-center">
        <Icon className="h-[21px] w-[21px]" box="0 0 21 21">
          <path d="M0 3l8.300-1.200V9.700H0zM9.300 1.600L21 0v9.700H9.300zM0 10.800h8.300v8L0 17.600zM9.300 10.800H21V21L9.300 19.300z" fill="#fff" />
        </Icon>
      </div>
      <div className="flex w-[435px] items-center border border-t-2 border-[#c6c6c6] bg-[#f1f1f1] pl-[14px]">
        <Icon className="mb-[2px] h-[22px] w-[22px]" box="0 0 22 22">
          <circle cx="14" cy="7.500" r="6.500" stroke="#222" strokeWidth="1.500" />
          <path d="M9.300 12.200L1 21" stroke="#222" strokeWidth="1.500" />
        </Icon>
        <span className="ml-[14px] whitespace-nowrap text-[18.500px] leading-none tracking-[-0.38px] text-[#454545]">Type here to search</span>
      </div>
      {TASKS.map((t, i) => (
        <div key={i} className={`flex shrink-0 flex-col ${t.w} ${t.tile ?? ""}`}>
          <div className="flex flex-1 items-center justify-center">{t.icon}</div>
          <div className={`h-[2px] ${t.bar ?? ""}`} />
        </div>
      ))}
      <div className="flex w-[46px] items-center justify-center text-[14px]">ENG</div>
      <div className="flex w-[93px] flex-col items-center justify-center gap-[5px] text-[14.500px] leading-[18px]">
        <span className="tracking-[-0.4px]">16:57</span>
        <span className="whitespace-nowrap tracking-[0.250px]">28-04-2020</span>
      </div>
      <div className="flex w-[62px] items-center justify-center">
        <div className="relative h-[30px] w-[30px]">
          <Icon className="h-[22px] w-[22px]" box="0 0 22 22">
            <path d="M0 1h21v15H12l-6 5v-5H0z" fill="#fff" />
            <path d="M3.500 5h14M3.500 8.500h14M3.500 12h9" stroke="#1e1e1e" strokeWidth="1.400" />
          </Icon>
          <span className="absolute left-[9px] top-[9px] flex h-[21px] w-[21px] items-center justify-center rounded-full border border-[#9a9a9a] bg-[#3c3c3c] text-[13px] font-semibold leading-none">3</span>
        </div>
      </div>
      <div className="w-px bg-[#5a5a5a]" />
    </div>
  );
}

/* ---------- Meeting control panel ---------- */
function ControlPanel() {
  return (
    <aside className="flex h-[186px] w-[47px] flex-col bg-[#4a5365]">
      <div className="ml-px h-[8px] border-b border-[#75839b]" />
      <div className="ml-px flex h-[54px] items-center justify-center border-b border-[#75839b] pl-[6px]">
        <Icon className="h-9 w-9" box="0 0 36 36">
          <circle cx="18" cy="18" r="17.500" fill="#ff2f0f" stroke="#ff7a60" />
          <rect x="14" y="7" width="8" height="14" rx="4" fill="#fff" />
          <path d="M11.500 15v3q0 6 6.500 6t6.500-6v-3M18 24v4M14 28h8" stroke="#fff" strokeWidth="1.800" />
          <path d="M24.500 10L12 23.500" stroke="#ff2f0f" strokeWidth="4" />
          <path d="M25 10L11 25" stroke="#fff" strokeWidth="1.500" />
        </Icon>
      </div>
      <div className="ml-px flex h-[54px] items-center justify-center border-b border-[#75839b] pl-[6px]">
        <Icon className="h-9 w-9" box="0 0 36 36">
          <circle cx="18" cy="18" r="18" fill="#fff" />
          <rect x="8" y="8" width="20" height="20" rx="2" stroke="#222b40" strokeWidth="1.500" />
          <path d="M8 12.500h20" stroke="#222b40" strokeWidth="1.400" />
        </Icon>
      </div>
      <div className="ml-px flex h-[54px] items-center justify-center pl-[6px]">
        <Icon className="h-9 w-9" box="0 0 36 36">
          <circle cx="18" cy="18" r="18" fill="#fff" />
          <path d="M14.500 3v12M18.500 3v12M22.500 3v12M26.500 6v10q0 7-5 9h-6q-3-.5-5-5l-2.500-3.500q1.500-2.500 5-.5l1.500 2" stroke="#222b40" strokeWidth="1.500" />
          <path d="M19.500 15.500l5 6H22V31h-5v-9.500h-2.500z" fill="#0aa757" />
        </Icon>
      </div>
      <div className="ml-[3px] mr-px mt-[-2px] h-[15px] bg-[repeating-linear-gradient(to_right,#1e2a42_0,#1e2a42_1px,#4a5365_1px,#4a5365_3px)]" />
    </aside>
  );
}

export default function App() {
  return (
    <div className={`relative flex h-[911px] w-[1904px] overflow-hidden border-y border-[#6a6a6a] bg-[#212121] ${SEGOE}`}>
      <div className="ml-[144px] flex w-[1616px] flex-col bg-black">
        <div className="flex h-[858px] shrink-0">
          <DesktopStrip />
          <div className="mt-[9px] flex h-[849px] w-[1568px] shrink-0 flex-col border-l border-[#8a8a8a]">
            <TabStrip />
            <AddressBar />
            <GophishPage />
          </div>
        </div>
        <Taskbar />
      </div>
      <div className="ml-auto -mt-px">
        <ControlPanel />
      </div>
    </div>
  );
}
